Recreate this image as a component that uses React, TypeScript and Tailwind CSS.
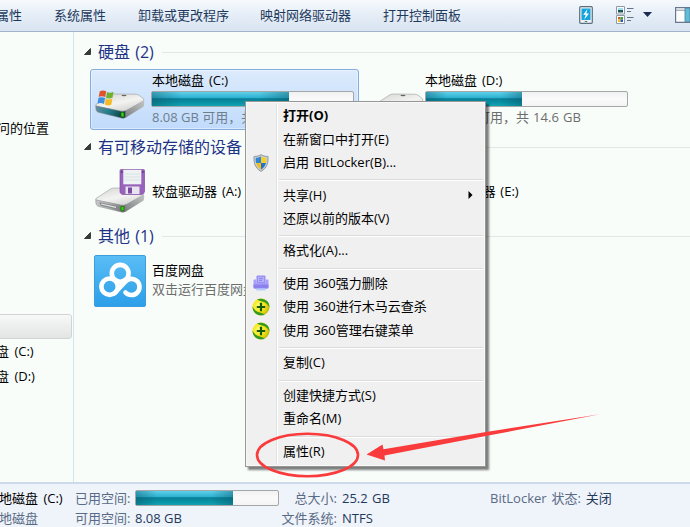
import type { ReactNode } from "react";
import clsx from "clsx";

type Entry = { label: string; icon?: ReactNode; bold?: boolean; submenu?: boolean } | "separator";

function Shield() {
  return <svg width="16" height="18" viewBox="0 0 16 18">
    <path d="M8 .6C6 2 3.4 2.5 1 2.4.6 9 2 14 8 17.4 14 14 15.4 9 15 2.4 12.600 2.500 10 2 8 .6Z" fill="#c9ced2" stroke="#8a9298" strokeWidth=".9" />
    <path d="M8 2.600C6.500 3.500 4.500 4 2.700 4c-.1 1.800 0 3.400.4 4.900H8Z" fill="#2f86d6" />
    <path d="M8 2.600C9.500 3.500 11.500 4 13.300 4c.1 1.800 0 3.400-.4 4.900H8Z" fill="#f7cf2b" />
    <path d="M3.100 8.900c.7 2.800 2.200 5 4.900 6.600V8.900Z" fill="#f2bd1c" />
    <path d="M12.900 8.900c-.7 2.800-2.200 5-4.900 6.600V8.900Z" fill="#2273c9" />
  </svg>;
}

function Shredder() {
  return <svg width="16" height="17" viewBox="0 0 16 17">
    <path d="M3.500 1.500q0-1 1-1h7q1 0 1 1V8h-9Z" fill="#9a90f2" />
    <path d="M5 2h6v5H5z" fill="#b7afff" />
    <path d="M6 3.600h4M6 5.400h3" stroke="#8177e6" strokeWidth=".8" />
    <path d="M1.500 4.500h2V8h9V4.500h2q1 0 1 1V12q0 1.500-1.500 1.500H2Q.5 13.500.5 12V5.500q0-1 1-1Z" fill="#a89ff8" />
    <path d="M.5 9.500h15V12q0 1.500-1.500 1.500H2Q.5 13.500.5 12Z" fill="#8c82ee" />
    <path d="M4 13.500h8l1 2H3Z" fill="#b3cdfa" />
  </svg>;
}

function Plus360() {
  return <svg width="18" height="18" viewBox="0 0 18 18">
    <defs>
      <radialGradient id="ball" cx=".38" cy=".42" r=".6">
        <stop offset="0" stopColor="#fffc7a" />
        <stop offset=".6" stopColor="#f3e516" />
        <stop offset="1" stopColor="#c5bd10" />
      </radialGradient>
    </defs>
    <circle cx="9" cy="9" r="8.500" fill="url(#ball)" />
    <path d="M5 1.500C8 .1 12.500.4 15.200 3.300c1.600 1.700 2.300 3.700 2.200 6.200C16 6.200 13.800 4.600 11 3.800 8.600 3 7 2.500 5 1.500Z" fill="#339a1b" />
    <path d="M13 16.500c-3 1.500-7.500 1.100-10.200-1.800C1.200 13 .5 11 .6 8.500 2 11.800 4.200 13.400 7 14.200c2.400.8 4 1.300 6 2.300Z" fill="#339a1b" />
    <path d="M9 4.800v8.400M4.800 9h8.400" stroke="#155c0c" strokeWidth="2.200" />
  </svg>;
}

function DriveBody({ teal }: { teal?: boolean }) {
  const id = teal ? "c" : "g";
  return <g>
    <defs>
      <linearGradient id={`top-${id}`} x1=".2" y1="0" x2=".8" y2="1">
        <stop offset="0" stopColor="#d9d9d8" />
        <stop offset=".5" stopColor="#f3f3f2" />
        <stop offset="1" stopColor="#cdcdcc" />
      </linearGradient>
      <linearGradient id={`front-${id}`} x1="0" y1="0" x2="1" y2=".2">
        <stop offset="0" stopColor={teal ? "#6d8da0" : "#c9c9c9"} />
        <stop offset=".5" stopColor={teal ? "#237f8d" : "#b2b2b2"} />
        <stop offset="1" stopColor={teal ? "#0d4043" : "#777"} />
      </linearGradient>
      <linearGradient id={`side-${id}`} x1="0" y1="1" x2="1" y2="0">
        <stop offset="0" stopColor="#777a7b" />
        <stop offset="1" stopColor="#c4c6c6" />
      </linearGradient>
    </defs>
    <path d="M1 14.500 15.500 5Q17 4 19.500 4L40 4.200Q42.500 4.200 44 5.200L48.600 8.800Q49.600 10 48 11.200L32 20.500Q29.500 22 26.500 21.200L2 16.800Q-.2 15.800 1 14.500Z" fill={`url(#top-${id})`} stroke="#9a9c9c" strokeWidth=".6" />
    <path d="M29 21.500 49 10.300Q49.600 14 48.600 16.600L31 27.500 28 28.300Z" fill={`url(#side-${id})`} />
    <path d="M.8 15.800 26 21.300Q28.500 21.600 30.500 20.800V27.200Q29 28.700 26.500 28.100L3.200 22.300Q.4 21.400.8 15.800Z" fill={`url(#front-${id})`} stroke="#808586" strokeWidth=".5" />
    <ellipse cx="29" cy="5.500" rx="2.600" ry=".8" fill="#666" />
    <path d="M26 22.200 29 22.500V27L26 26.800Z" fill="#35d414" stroke="#17640b" strokeWidth=".7" />
  </g>;
}

function SystemDrive() {
  return <svg width="50" height="30" viewBox="0 0 50 30" className="overflow-visible">
    <DriveBody teal />
    <g transform="translate(2.500 .5)">
      <path d="M2.300.8Q5.500-1 8.700.8L7.700 6.500Q4.800 5 1.200 6.300Z" fill="#e0522b" />
      <path d="M9.500 1.500Q12.500 3 16 1.300L15 7.200Q11.500 8.700 8.500 7Z" fill="#70b030" />
      <path d="M1 7.300Q4.400 6 7.500 7.500L6.500 13.500Q3.300 11.800 0 13.100Z" fill="#3f8fe0" />
      <path d="M8.300 8Q11.500 9.700 14.800 8.200L13.800 14.200Q10.500 15.700 7.300 14Z" fill="#f6bb24" />
    </g>
  </svg>;
}

function PlainDrive() {
  return <svg width="50" height="30" viewBox="0 0 50 30"><DriveBody /></svg>;
}

function FloppyDrive() {
  return <svg width="50" height="44" viewBox="0 0 50 44">
    <g transform="translate(0 15)">
      <DriveBody />
      <path d="M4.500 18.200 23 22.300Q23 25.300 20 25L7 22Q4.300 21 4.500 18.200Z" fill="#85898b" />
      <path d="M6 20 21 23.400" stroke="#e4e4e4" strokeWidth="1.200" />
    </g>
    <path d="M26 .6h22.500q1 0 1 1V22q0 1.400-1 2.200l-1.500 1.200H27.200L25 23.600V1.600q0-1 1-1Z" fill="#9a63bb" stroke="#7d4aa0" strokeWidth=".7" />
    <path d="M28.300.8h18v14.500h-18z" fill="#edf3f3" />
    <path d="M29.500 5h15.700M29.500 8h15.700M29.500 11h15.700" stroke="#d3dcdf" strokeWidth=".8" />
    <path d="M30.500 17.500h14v7.500h-14z" fill="#e6e4ee" />
    <path d="M33 18.500h4v6h-4z" fill="#7a4ba0" />
    <path d="M26.300 2.200h1.200v1.600h-1.200zM47.200 2.200h1.200v1.600h-1.200z" fill="#472060" />
  </svg>;
}

function BaiduCloud() {
  return <svg width="52" height="52" viewBox="0 0 52 52">
    <defs>
      <linearGradient id="sky" x1="0" y1="0" x2="0" y2="1">
        <stop offset="0" stopColor="#5abdf5" />
        <stop offset="1" stopColor="#2b9fe8" />
      </linearGradient>
    </defs>
    <rect x=".5" y=".5" width="51" height="51" rx="1.500" fill="url(#sky)" stroke="#3b9fdd" />
    <g fill="none" stroke="#fff" strokeWidth="4.600">
      <circle cx="26.200" cy="18.300" r="8.400" />
      <circle cx="15.600" cy="31.700" r="8.200" />
      <path d="M20.800 38 31 27A8.100 8.100 0 1 1 31.500 37.500" strokeLinecap="round" />
    </g>
  </svg>;
}

function UsageBar({ used, className }: { used: number; className?: string }) {
  return <div className={clsx("h-4 rounded-[2px] border border-[#a3a7a8] bg-gradient-to-b from-[#f1f1f1] via-[#fafafa] to-[#f4f4f4]", className)}>
    <div className="h-full bg-[linear-gradient(90deg,#0a4d5e66_0%,transparent_22%,transparent_78%,#0a4d5e66_100%),linear-gradient(180deg,#5fd0ea_0%,#2cb0d0_42%,#077e95_48%,#0a95a8_80%,#14a3b4_100%)]" style={{ width: `${used}%` }} />
  </div>;
}

function GroupHeader({ title, className }: { title: string; className?: string }) {
  return <div className={clsx("flex h-5 items-center", className)}>
    <svg width="7" height="7" viewBox="0 0 7 7" className="mr-[7px] mb-px shrink-0"><path d="M6.500.5v6h-6Z" fill="#3a3a3a" stroke="#111" strokeWidth=".7" /></svg>
    <h2 className="text-[16px] whitespace-nowrap text-[#1e3287] [word-spacing:1px]">{title}</h2>
    <span className="mt-px ml-2 h-px flex-1 bg-[#e2e6e6]" />
  </div>;
}

const entries: Entry[] = [
  { label: "打开(O)", bold: true },
  { label: "在新窗口中打开(E)" },
  { label: "启用 BitLocker(B)...", icon: <Shield /> },
  "separator",
  { label: "共享(H)", submenu: true },
  { label: "还原以前的版本(V)" },
  "separator",
  { label: "格式化(A)..." },
  "separator",
  { label: "使用 360强力删除", icon: <Shredder /> },
  { label: "使用 360进行木马云查杀", icon: <Plus360 /> },
  { label: "使用 360管理右键菜单", icon: <Plus360 /> },
  "separator",
  { label: "复制(C)" },
  "separator",
  { label: "创建快捷方式(S)" },
  { label: "重命名(M)" },
  "separator",
  { label: "属性(R)" },
];

function ContextMenu() {
  return <div className="absolute top-[101px] left-[245px] w-[241px] border border-[#979797] bg-[#f0f0f0] p-[2px] shadow-[3px_3px_2px_#00000080] outline-1 -outline-offset-2 outline-[#f8f8f8]">
    <div className="relative before:absolute before:inset-y-0 before:left-[28px] before:w-[2px] before:border-l before:border-[#e2e3e3] before:bg-white">
      {entries.map((entry, i) => entry === "separator"
        ? <div key={i} className="flex h-[8.6px] items-center pt-[2px] pl-[31px]"><span className="h-[2px] flex-1 border-t border-[#dcdcdc] bg-white" /></div>
        : <div key={i} className="flex h-[23.7px] items-center pb-px text-black">
          <span className="flex w-[25px] justify-center">{entry.icon}</span>
          <span className={clsx("ml-[10px] flex-1 pb-px whitespace-nowrap [word-spacing:1px]", entry.bold && "font-bold")}>{entry.label}</span>
          {entry.submenu && <svg width="5" height="8" viewBox="0 0 5 8" className="mr-[10px]"><path d="M.5 0v8l4-4Z" fill="#000" /></svg>}
        </div>)}
    </div>
  </div>;
}

function Toolbar() {
  return <header className="flex h-8 shrink-0 items-center border-b border-[#a3b3cd] bg-gradient-to-b from-[#f7fafd] via-[#e6eef7] via-45% to-[#d9e4f1] pb-[2px] whitespace-nowrap text-[#1e395b]">
    <span className="-ml-1 w-[58px]">属性</span>
    <span className="w-[84px]">系统属性</span>
    <span className="w-[122px]">卸载或更改程序</span>
    <span className="w-[123px]">映射网络驱动器</span>
    <span>打开控制面板</span>
    <div className="ml-auto flex items-center">
      <svg width="14" height="18" viewBox="0 0 14 18">
        <rect x=".7" y=".7" width="12.600" height="16.600" rx="1" fill="#eef2f5" stroke="#5c6f80" strokeWidth="1.200" />
        <path d="M2.500 2.500h9v11.500h-9z" fill="#16a4dd" />
        <path d="M8.500 3 4.200 8.800h2.500L5.300 13.500 10 7.500H7.300Z" fill="#fff" />
        <path d="M5.800 15.500h2.400" stroke="#5c6f80" />
      </svg>
      <svg width="18" height="18" viewBox="0 0 18 18" className="ml-[23px]">
        <path d="M.5.500h8v7.500h-8zM.5 9.500h8v8h-8z" fill="#fff" stroke="#909aa5" />
        <path d="M2 2h5v3H2z" fill="#a5dcee" /><path d="M2 4h5v2.500H2z" fill="#19545a" />
        <path d="M2 11h2.500v2.500H2z" fill="#d55a25" /><path d="M4.500 11H7v2.500H4.500z" fill="#2da54b" />
        <path d="M2 13.500h2.500V16H2z" fill="#e8c521" /><path d="M4.500 13.500H7V16H4.500z" fill="#3155b4" />
        <path d="M11 2.500h6.500M11 5.500h4M11 11.500h6.500M11 14.500h4" stroke="#61728a" strokeWidth="1.200" />
      </svg>
      <svg width="9" height="5" viewBox="0 0 9 5" className="ml-[9px]"><path d="M0 0h9L4.500 5Z" fill="#1b2c50" /></svg>
      <svg width="15" height="16" viewBox="0 0 15 16" className="ml-[23px]">
        <path d="M.6.600H16v14.800H.6z" fill="#fdfdfd" stroke="#67788e" strokeWidth="1.200" />
        <path d="M1 3.200h9" stroke="#8292a5" />
        <path d="M10 1.200h5v13.600h-5z" fill="#62bcd9" stroke="#4c7f9b" strokeWidth=".8" />
      </svg>
    </div>
  </header>;
}

function Sidebar() {
  return <aside className="w-[74px] shrink-0 overflow-hidden border-r border-[#d3e3f0] whitespace-nowrap text-black">
    <div className="mt-[86px] -ml-[3px] h-5 leading-5">问的位置</div>
    <div className="mt-[176px] -ml-1 h-[25px] w-[76px] rounded-[3px] border border-[#d2d4d4] bg-gradient-to-b from-[#f7f9f8] to-[#e3e5e4]" />
    <div className="mt-[2px] -ml-[4px] h-[25px] leading-[20px] [word-spacing:2px]">盘 (C:)</div>
    <div className="-ml-[4px] h-[25px] leading-[20px] [word-spacing:2px]">盘 (D:)</div>
  </aside>;
}

function Files() {
  return <main className="min-w-0 flex-1 overflow-hidden pt-[10px] whitespace-nowrap">
    <GroupHeader title="硬盘 (2)" className="pl-[10px]" />
    <div className="mt-[7px] ml-4 flex">
      <div className="flex h-[61px] w-[269px] rounded-[3px] border border-[#84acdd] bg-gradient-to-b from-[#dcebfc] to-[#c1dbfc] pl-1 shadow-[inset_0_0_0_1px_#ffffff60]">
        <div className="mt-[20px] w-[56px]"><SystemDrive /></div>
        <div className="w-[203px]">
          <div className="h-[21px] pl-px leading-[20px] text-black [word-spacing:1.5px]">本地磁盘 (C:)</div>
          <UsageBar used={68} />
          <div className="h-[20px] pl-px leading-[20px] text-[#6d7f8f]">8.08 GB 可用，共 25.2 GB</div>
        </div>
      </div>
      <div className="ml-[9px] flex h-[61px] pt-px">
        <div className="mt-[20px] w-[57px] pl-[6px]"><PlainDrive /></div>
        <div className="w-[203px]">
          <div className="h-[21px] leading-[20px] text-black [word-spacing:1.5px]">本地磁盘 (D:)</div>
          <UsageBar used={48} />
          <div className="h-[20px] leading-[20px] text-[#6d6d6d] [word-spacing:.8px]">7.52 GB 可用，共 14.6 GB</div>
        </div>
      </div>
    </div>
    <GroupHeader title="有可移动存储的设备 (2)" className="mt-[7px] pl-[10px]" />
    <div className="mt-[12px] ml-[21px] flex h-[44px] items-center text-black [word-spacing:1.5px]">
      <div className="w-[57px]"><FloppyDrive /></div>
      <div className="w-[273px] pb-px">软盘驱动器 (A:)</div>
      <div className="pb-px">DVD 驱动器 (E:)</div>
    </div>
    <GroupHeader title="其他 (1)" className="mt-[13px] pl-[10px]" />
    <div className="mt-[9px] ml-5 flex">
      <div className="w-[58px]"><BaiduCloud /></div>
      <div className="pt-[5px] leading-5">
        <div className="text-black">百度网盘</div>
        <div className="-mt-px text-[#6d6d6d]">双击运行百度网盘</div>
      </div>
    </div>
  </main>;
}

function DetailsPane() {
  return <footer className="flex h-[45px] shrink-0 border-t-2 border-[#ccdaeb] bg-[#eff3fa] pt-1 leading-5 whitespace-nowrap text-[#5a6b85]">
    <div className="-ml-px w-[76px]">
      <div className="text-black [word-spacing:2px]">地磁盘 (C:)</div>
      <div>地磁盘</div>
    </div>
    <div className="w-[60px]">
      <div>已用空间:</div>
      <div>可用空间:</div>
    </div>
    <div className="w-[144px] text-[#1e395b]">
      <div className="flex h-5 items-center pb-px"><UsageBar used={68} className="w-full" /></div>
      <div>8.08 GB</div>
    </div>
    <div className="w-[58px] text-right">
      <div>总大小:</div>
      <div>文件系统:</div>
    </div>
    <div className="ml-[5px] w-[148px] text-[#1e395b]">
      <div className="[word-spacing:1px]">25.2 GB</div>
      <div>NTFS</div>
    </div>
    <div className="[word-spacing:1.5px]">BitLocker 状态: <span className="text-[#1e395b]">关闭</span></div>
  </footer>;
}

export default function App() {
  return <div className="relative flex h-[527px] w-[690px] flex-col overflow-hidden bg-[#f8fdfa] font-['Open_Sans','Noto_Sans_CJK_SC',sans-serif] text-[13px] leading-5">
    <Toolbar />
    <div className="flex min-h-0 flex-1"><Sidebar /><Files /></div>
    <DetailsPane />
    <ContextMenu />
    <svg className="absolute inset-0" width="690" height="527" viewBox="0 0 690 527">
      <ellipse cx="307.500" cy="455" rx="50.500" ry="21.300" fill="none" stroke="#fa3b3b" strokeWidth="2.600" />
      <path d="M366.500 454.500 382.500 444.500 383.500 449.300 486 432 600 414.300 487 435.800 384.500 455.500 385 460.500Z" fill="#fa3b3b" />
    </svg>
  </div>;
}
